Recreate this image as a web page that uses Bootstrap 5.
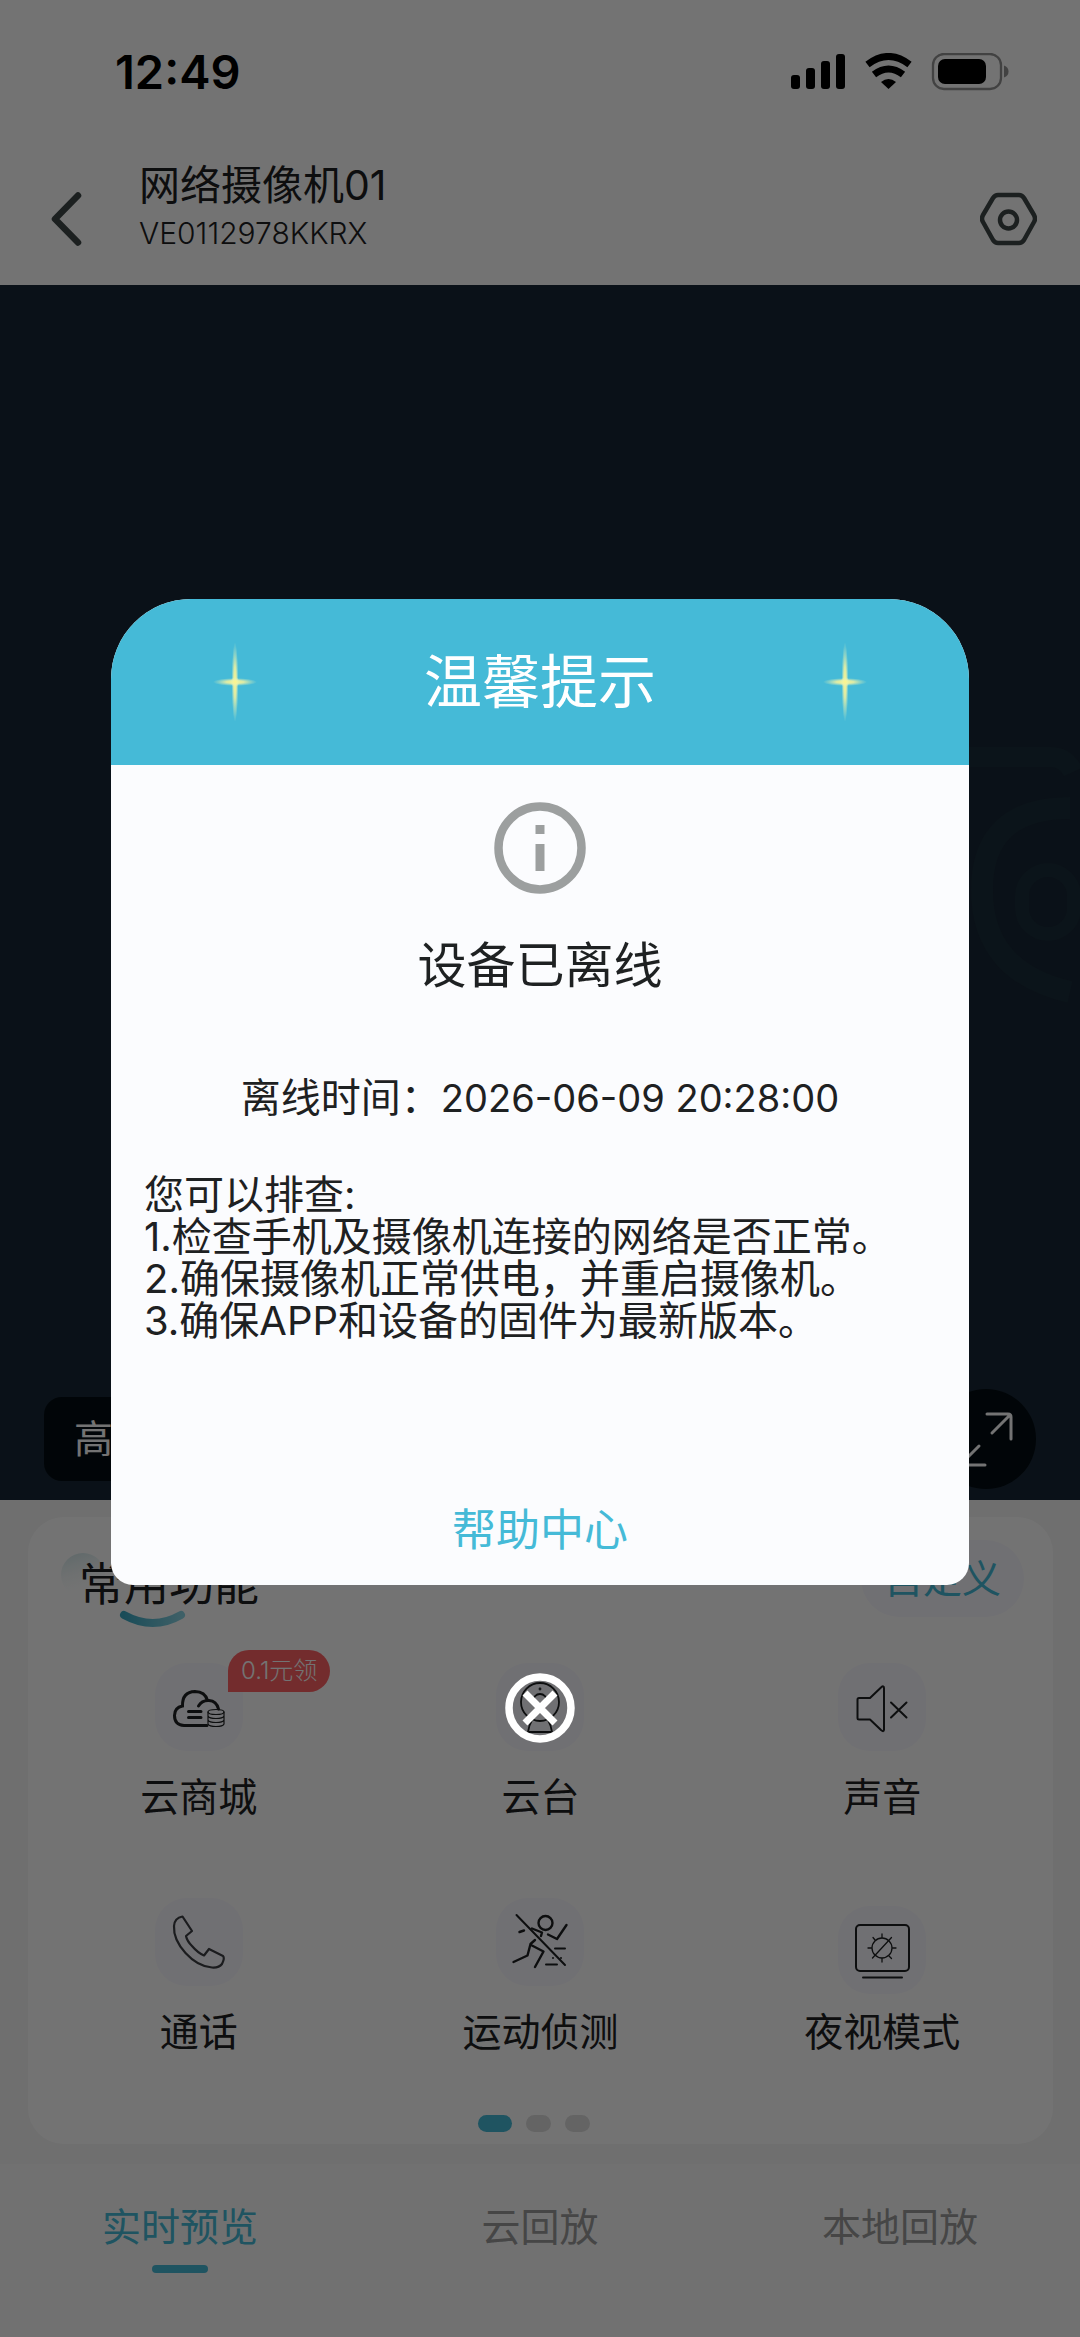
<!DOCTYPE html>
<html lang="zh-CN">
<head>
<meta charset="utf-8">
<meta name="viewport" content="width=device-width, initial-scale=1">
<title>网络摄像机01</title>
<link href="https://cdn.jsdelivr.net/npm/bootstrap@5.3.0/dist/css/bootstrap.min.css" rel="stylesheet">
<style>
:root { --teal: #45bad7; --ink: #1e2122; }
body { font-family: Inter, "Noto Sans CJK SC", sans-serif; font-size: 40px; line-height: 60px; color: var(--ink); background: #f7f7f7; }
svg { display: block; flex: none; }
.btn { --bs-btn-padding-x: 0; --bs-btn-padding-y: 0; --bs-btn-font-size: 39px; --bs-btn-line-height: 60px; --bs-btn-border-width: 0; --bs-btn-color: inherit; }
.status-bar { padding: 42px 71px 0 115px; }
.clock { font-size: 47px; font-weight: 600; color: #000; }
.app-header { padding: 58px 43px 29px 50px; }
.head-btn { height: 74px; }
.head-text { margin-left: 57px; }
.cam-name { font-size: 41px; line-height: 50px; font-weight: 400; }
.cam-id { font-size: 30px; line-height: 46px; font-weight: 300; }
.video { aspect-ratio: 8 / 9; background: #182635; padding: 0 44px 11px; }
.watermark { right: 0; top: 455px; }
.quality { height: 84px; padding: 0 30px; margin-bottom: 8px; background: #030d12; color: #fff; --bs-btn-border-radius: 18px; }
.full-btn { width: 100px; height: 100px; background: #030d12; --bs-btn-border-radius: 50px; }
.panel { margin: 17px 27px 20px 28px; border-radius: 36px; background: #fff; padding-bottom: 12px; }
.panel-head { padding: 23px 29px 0 51px; height: 100px; }
.panel-title { font-size: 45px; line-height: 60px; font-weight: 400; padding-top: 15px; }
.deco { left: -18px; top: 1px; }
.panel-title span { position: relative; }
.custom { height: 77px; padding: 0 23px; border-radius: 39px; background: #f9f8ff; color: var(--teal); }
.tools { font-size: 39px; padding-top: 46px; row-gap: 71px; }
.tile { width: 88px; height: 88px; border-radius: 32px; background: #f9f8ff; }
.promo { left: 200px; top: -13px; height: 42px; line-height: 42px; font-size: 24px; font-weight: 300; padding: 0 13px; border-radius: 21px 21px 21px 0; background: #ff6265; color: #fff; }
.dots { margin-top: 53px; height: 17px; }
.dots i { width: 25px; margin-right: 14px; border-radius: 9px; background: #dedede; }
.dots i.on { width: 34px; background: var(--teal); }
.tabs { font-size: 39px; background: #fbfbfb; padding-top: 33px; color: #9c9c9c; }
.tabs a { color: inherit; text-decoration: none; }
.tabs .active { color: var(--teal); }
.tabs .active::after { content: ""; width: 56px; height: 8px; border-radius: 4px; background: var(--teal); margin-top: 8px; }
.modal-backdrop { --bs-backdrop-opacity: .55; }
.modal { padding: 5px 111px 0; }
.notice { border: 0; border-radius: 80px 80px 22px 22px; overflow: hidden; background: #fbfcfe; color: var(--ink); }
.notice-head { height: 166px; padding: 0 102px; background: var(--teal); border: 0; border-radius: 0; color: #fff; }
.notice-head h1 { font-size: 58px; line-height: 72px; font-weight: 400; }
.notice-body { padding: 37px 33px 25px; }
.notice-title { font-size: 49px; line-height: 60px; font-weight: 400; margin-top: 42px; }
.when { margin-top: 72px; }
.when time { font-size: 38px; }
.checks { margin-top: 46px; line-height: 42px; }
.help { font-size: 44px; color: var(--teal); text-decoration: none; margin-top: 158px; }
.close-btn { margin-top: 88px; }
</style>
</head>
<body>
<div class="d-flex flex-column min-vh-100">
  <header class="bg-white">
    <div class="status-bar d-flex align-items-center justify-content-between">
      <span class="clock">12:49</span>
      <svg width="218" height="38" viewBox="0 0 218 38">
        <rect x="0" y="22" width="9" height="14" rx="3"/><rect x="15" y="15" width="9" height="21" rx="3"/><rect x="30" y="8" width="9" height="28" rx="3"/><rect x="45" y="1" width="9" height="35" rx="3"/>
        <path d="M76.500 11.500Q97.500 -4.500 118.500 11.500" fill="none" stroke="#000" stroke-width="7"/>
        <path d="M83 21.500Q97.500 10.500 112 21.500" fill="none" stroke="#000" stroke-width="7"/>
        <path d="M90 29Q97.500 23 105 29L97.500 36Z"/>
        <rect x="142" y="1" width="68" height="35" rx="11" fill="none" stroke="#929292" stroke-width="2.300"/>
        <rect x="147" y="6" width="48" height="25" rx="7"/><path d="M213 12.500Q217.500 14 217.500 18.500T213 24.500Z" fill="#929292"/>
      </svg>
    </div>
    <div class="app-header d-flex align-items-end">
      <button class="btn head-btn d-flex align-items-center" aria-label="返回"><svg width="32" height="54" viewBox="0 0 32 54" fill="none" stroke="#3f4848" stroke-width="6.500" stroke-linecap="round" stroke-linejoin="round"><path d="M28 3.500L5 27L28 50.500"/></svg></button>
      <div class="head-text flex-grow-1">
        <h1 class="cam-name m-0">网络摄像机01</h1>
        <div class="cam-id">VE0112978KKRX</div>
      </div>
      <button class="btn head-btn d-flex align-items-center" aria-label="设置"><svg width="57" height="54" viewBox="0 0 57 54" fill="none" stroke="#3f4848" stroke-width="4.500" stroke-linejoin="round"><path d="M18 3H39Q42 3 44 6L54 23Q56 27 54 30L44 48Q42 51 39 51H18Q15 51 13 48L3 30Q1 27 3 23L13 6Q15 3 18 3Z"/><circle cx="28.500" cy="28" r="8.500"/></svg></button>
    </div>
  </header>

  <section class="video position-relative d-flex align-items-end justify-content-between">
    <svg class="watermark position-absolute" width="120" height="270" viewBox="0 0 120 270" fill="none" stroke="#1a2d3a" aria-hidden="true">
      <path d="M0 17H90Q106 17 113 32" stroke-width="20"/><path d="M110 68Q22 68 22 150T110 252" stroke-width="22"/><rect x="62" y="130" width="52" height="64" rx="26" stroke-width="14"/>
    </svg>
    <button class="btn quality">高清</button>
    <button class="btn full-btn d-flex align-items-center justify-content-center" aria-label="全屏"><svg width="56" height="56" viewBox="0 0 56 56" fill="none" stroke="#fff" stroke-width="3" stroke-linecap="round" stroke-linejoin="round"><path d="M29 3H50Q53 3 53 6V28M52 4L34 22M21 35L4 52M3 29V51Q3 54 6 54H27"/></svg></button>
  </section>

  <main class="panel">
    <div class="panel-head d-flex align-items-start justify-content-between">
      <h2 class="panel-title position-relative m-0">
        <svg class="deco position-absolute" width="140" height="92" viewBox="0 0 140 92" fill="none" aria-hidden="true">
          <defs><linearGradient id="blob" x1="0" y1="0" x2=".3" y2="1"><stop offset="0" stop-color="#cfe6e8"/><stop offset="1" stop-color="#fff" stop-opacity="0"/></linearGradient><linearGradient id="smile"><stop offset="0" stop-color="#3aa9c4"/><stop offset="1" stop-color="#8ad4e4"/></linearGradient></defs>
          <circle cx="22" cy="34" r="22" fill="url(#blob)"/><path d="M63 74Q92 90 120 74" stroke="url(#smile)" stroke-width="8" stroke-linecap="round"/>
        </svg>
        <span>常用功能</span>
      </h2>
      <button class="btn custom">自定义</button>
    </div>
    <div class="tools row g-0 text-center">
      <div class="col-4 position-relative d-flex flex-column align-items-center">
        <div class="tile mb-3"><svg width="88" height="88" viewBox="0 0 88 88" fill="none" stroke="#1e2122" stroke-width="3" stroke-linecap="round"><path d="M52 62.500H29Q19.500 62 19.500 52.500Q19.500 44.500 27.500 43Q27 29 40 28.500Q50 28.500 52.500 37.500M43.500 43Q47 37 54 37.500Q61.500 38 63.500 46M33.500 48.500H46M33.500 54.500H46"/><g stroke-width="1.200"><ellipse cx="61" cy="49" rx="8" ry="2.500"/><path d="M53 49V61Q54 63.500 61 63.500T69 61V49M53 53Q54 55.500 61 55.500T69 53M53 57Q54 59.500 61 59.500T69 57"/></g></svg></div>
        <span class="promo position-absolute">0.1元领</span>
        <span>云商城</span>
      </div>
      <div class="col-4 d-flex flex-column align-items-center">
        <div class="tile mb-3"><svg width="88" height="88" viewBox="0 0 88 88" fill="none" stroke="#1e2122" stroke-width="1.800"><circle cx="44" cy="39" r="19"/><circle cx="44" cy="38" r="7"/><circle cx="44" cy="26" r=".5"/><path d="M36 57Q33 62 32 69H56Q55 62 52 57"/></svg></div>
        <span>云台</span>
      </div>
      <div class="col-4 d-flex flex-column align-items-center">
        <div class="tile mb-3"><svg width="88" height="88" viewBox="0 0 88 88" fill="none" stroke="#1e2122" stroke-width="2" stroke-linecap="round" stroke-linejoin="round"><path d="M21 35H32L43 24.500Q46 22 46 25V66.500Q46 69.500 43 67L32 56.500H21Q19.500 56.500 19.500 55V36.500Q19.500 35 21 35ZM53 39.500L68.500 54.500M68.500 39.500L53 54.500"/></svg></div>
        <span>声音</span>
      </div>
      <div class="col-4 d-flex flex-column align-items-center">
        <div class="tile mb-3"><svg width="88" height="88" viewBox="0 0 88 88" fill="none" stroke="#3c3e44" stroke-width="2.200" stroke-linejoin="round"><path d="M27.500 18.500L37 33L31 38Q32 43 37 48Q43 55 49 57.500L54 51L68 58Q70 60 67 66Q64 70 57 69.500C38 68 18 46 19 28Q19.500 20 27.500 18.500Z"/></svg></div>
        <span>通话</span>
      </div>
      <div class="col-4 d-flex flex-column align-items-center">
        <div class="tile mb-3"><svg width="88" height="88" viewBox="0 0 88 88" fill="none" stroke="#1e2122" stroke-width="2.400" stroke-linecap="round" stroke-linejoin="round"><path d="M20.500 17L69 67" stroke-width="2"/><circle cx="49.500" cy="25" r="7"/><path d="M52 36.500L61 41L70.500 27M23.500 34L28 32.500M36 30.500L46 34.500L45 38M39 42L34.500 46L31.500 57.500L17.500 64M35 47L47.500 53.500L39 69"/><path d="M59 50.500H69M50 66.500H61M57 60V60.010M65 60V60.010" stroke-width="2"/></svg></div>
        <span>运动侦测</span>
      </div>
      <div class="col-4 d-flex flex-column align-items-center">
        <div class="tile mt-2 mb-2"><svg width="88" height="88" viewBox="0 0 88 88" fill="none" stroke="#1e2122" stroke-width="2" stroke-linecap="round"><rect x="18" y="19" width="53" height="46" rx="4"/><path d="M25 71.500H64"/><g stroke-width="1.300"><circle cx="44" cy="42" r="10"/><path d="M34.500 52L53.500 31.500M44 28V31.500M44 52.500V56M30 42H33.500M54.500 42H58M35 31.500L37 34M51 50L53.500 52.500"/></g></svg></div>
        <span>夜视模式</span>
      </div>
    </div>
    <div class="dots d-flex justify-content-center"><i class="on"></i><i></i><i></i></div>
  </main>

  <nav class="tabs row g-0 text-center flex-grow-1">
    <a href="#live" class="col-4 active d-flex flex-column align-items-center">实时预览</a>
    <a href="#cloud" class="col-4">云回放</a>
    <a href="#local" class="col-4">本地回放</a>
  </nav>
</div>

<div class="modal-backdrop show"></div>
<div class="modal show d-flex flex-column align-items-center justify-content-center" role="dialog" aria-modal="true" aria-labelledby="noticeTitle">
  <div class="modal-content notice">
    <div class="modal-header notice-head d-flex align-items-center justify-content-between">
      <svg width="44" height="80" viewBox="0 0 44 80" aria-hidden="true"><defs><radialGradient id="glow"><stop offset="0" stop-color="#fff68a"/><stop offset=".4" stop-color="#f3f3a0" stop-opacity=".85"/><stop offset="1" stop-color="#d8f0c0" stop-opacity="0"/></radialGradient></defs><ellipse cx="22" cy="40" rx="3.500" ry="40" fill="url(#glow)"/><ellipse cx="22" cy="40" rx="22" ry="4" fill="url(#glow)"/><circle cx="22" cy="40" r="5" fill="url(#glow)"/></svg>
      <h1 class="m-0" id="noticeTitle">温馨提示</h1>
      <svg width="44" height="80" viewBox="0 0 44 80" aria-hidden="true"><ellipse cx="22" cy="40" rx="3.500" ry="40" fill="url(#glow)"/><ellipse cx="22" cy="40" rx="22" ry="4" fill="url(#glow)"/><circle cx="22" cy="40" r="5" fill="url(#glow)"/></svg>
    </div>
    <div class="modal-body notice-body d-flex flex-column align-items-center">
      <svg width="92" height="92" viewBox="0 0 92 92"><circle cx="46" cy="46" r="41.500" fill="none" stroke="#9c9f9f" stroke-width="8.500"/><path d="M41.500 23H50.500V32H41.500ZM41.500 42H50.500V69H41.500Z" fill="#9c9f9f"/></svg>
      <h2 class="notice-title mb-0">设备已离线</h2>
      <div class="when">离线时间：<time>2026-06-09 20:28:00</time></div>
      <div class="checks align-self-stretch">您可以排查:<br>1.检查手机及摄像机连接的网络是否正常。<br>2.确保摄像机正常供电，并重启摄像机。<br>3.确保APP和设备的固件为最新版本。</div>
      <a href="#help" class="help">帮助中心</a>
    </div>
  </div>
  <button class="btn close-btn" aria-label="关闭"><svg width="70" height="70" viewBox="0 0 70 70" fill="none" stroke="#fff"><circle cx="35" cy="35" r="31" stroke-width="7.500"/><path d="M20 20L50 50M50 20L20 50" stroke-width="7"/></svg></button>
</div>
<script src="https://cdn.jsdelivr.net/npm/bootstrap@5.3.0/dist/js/bootstrap.bundle.min.js"></script>
</body>
</html>
